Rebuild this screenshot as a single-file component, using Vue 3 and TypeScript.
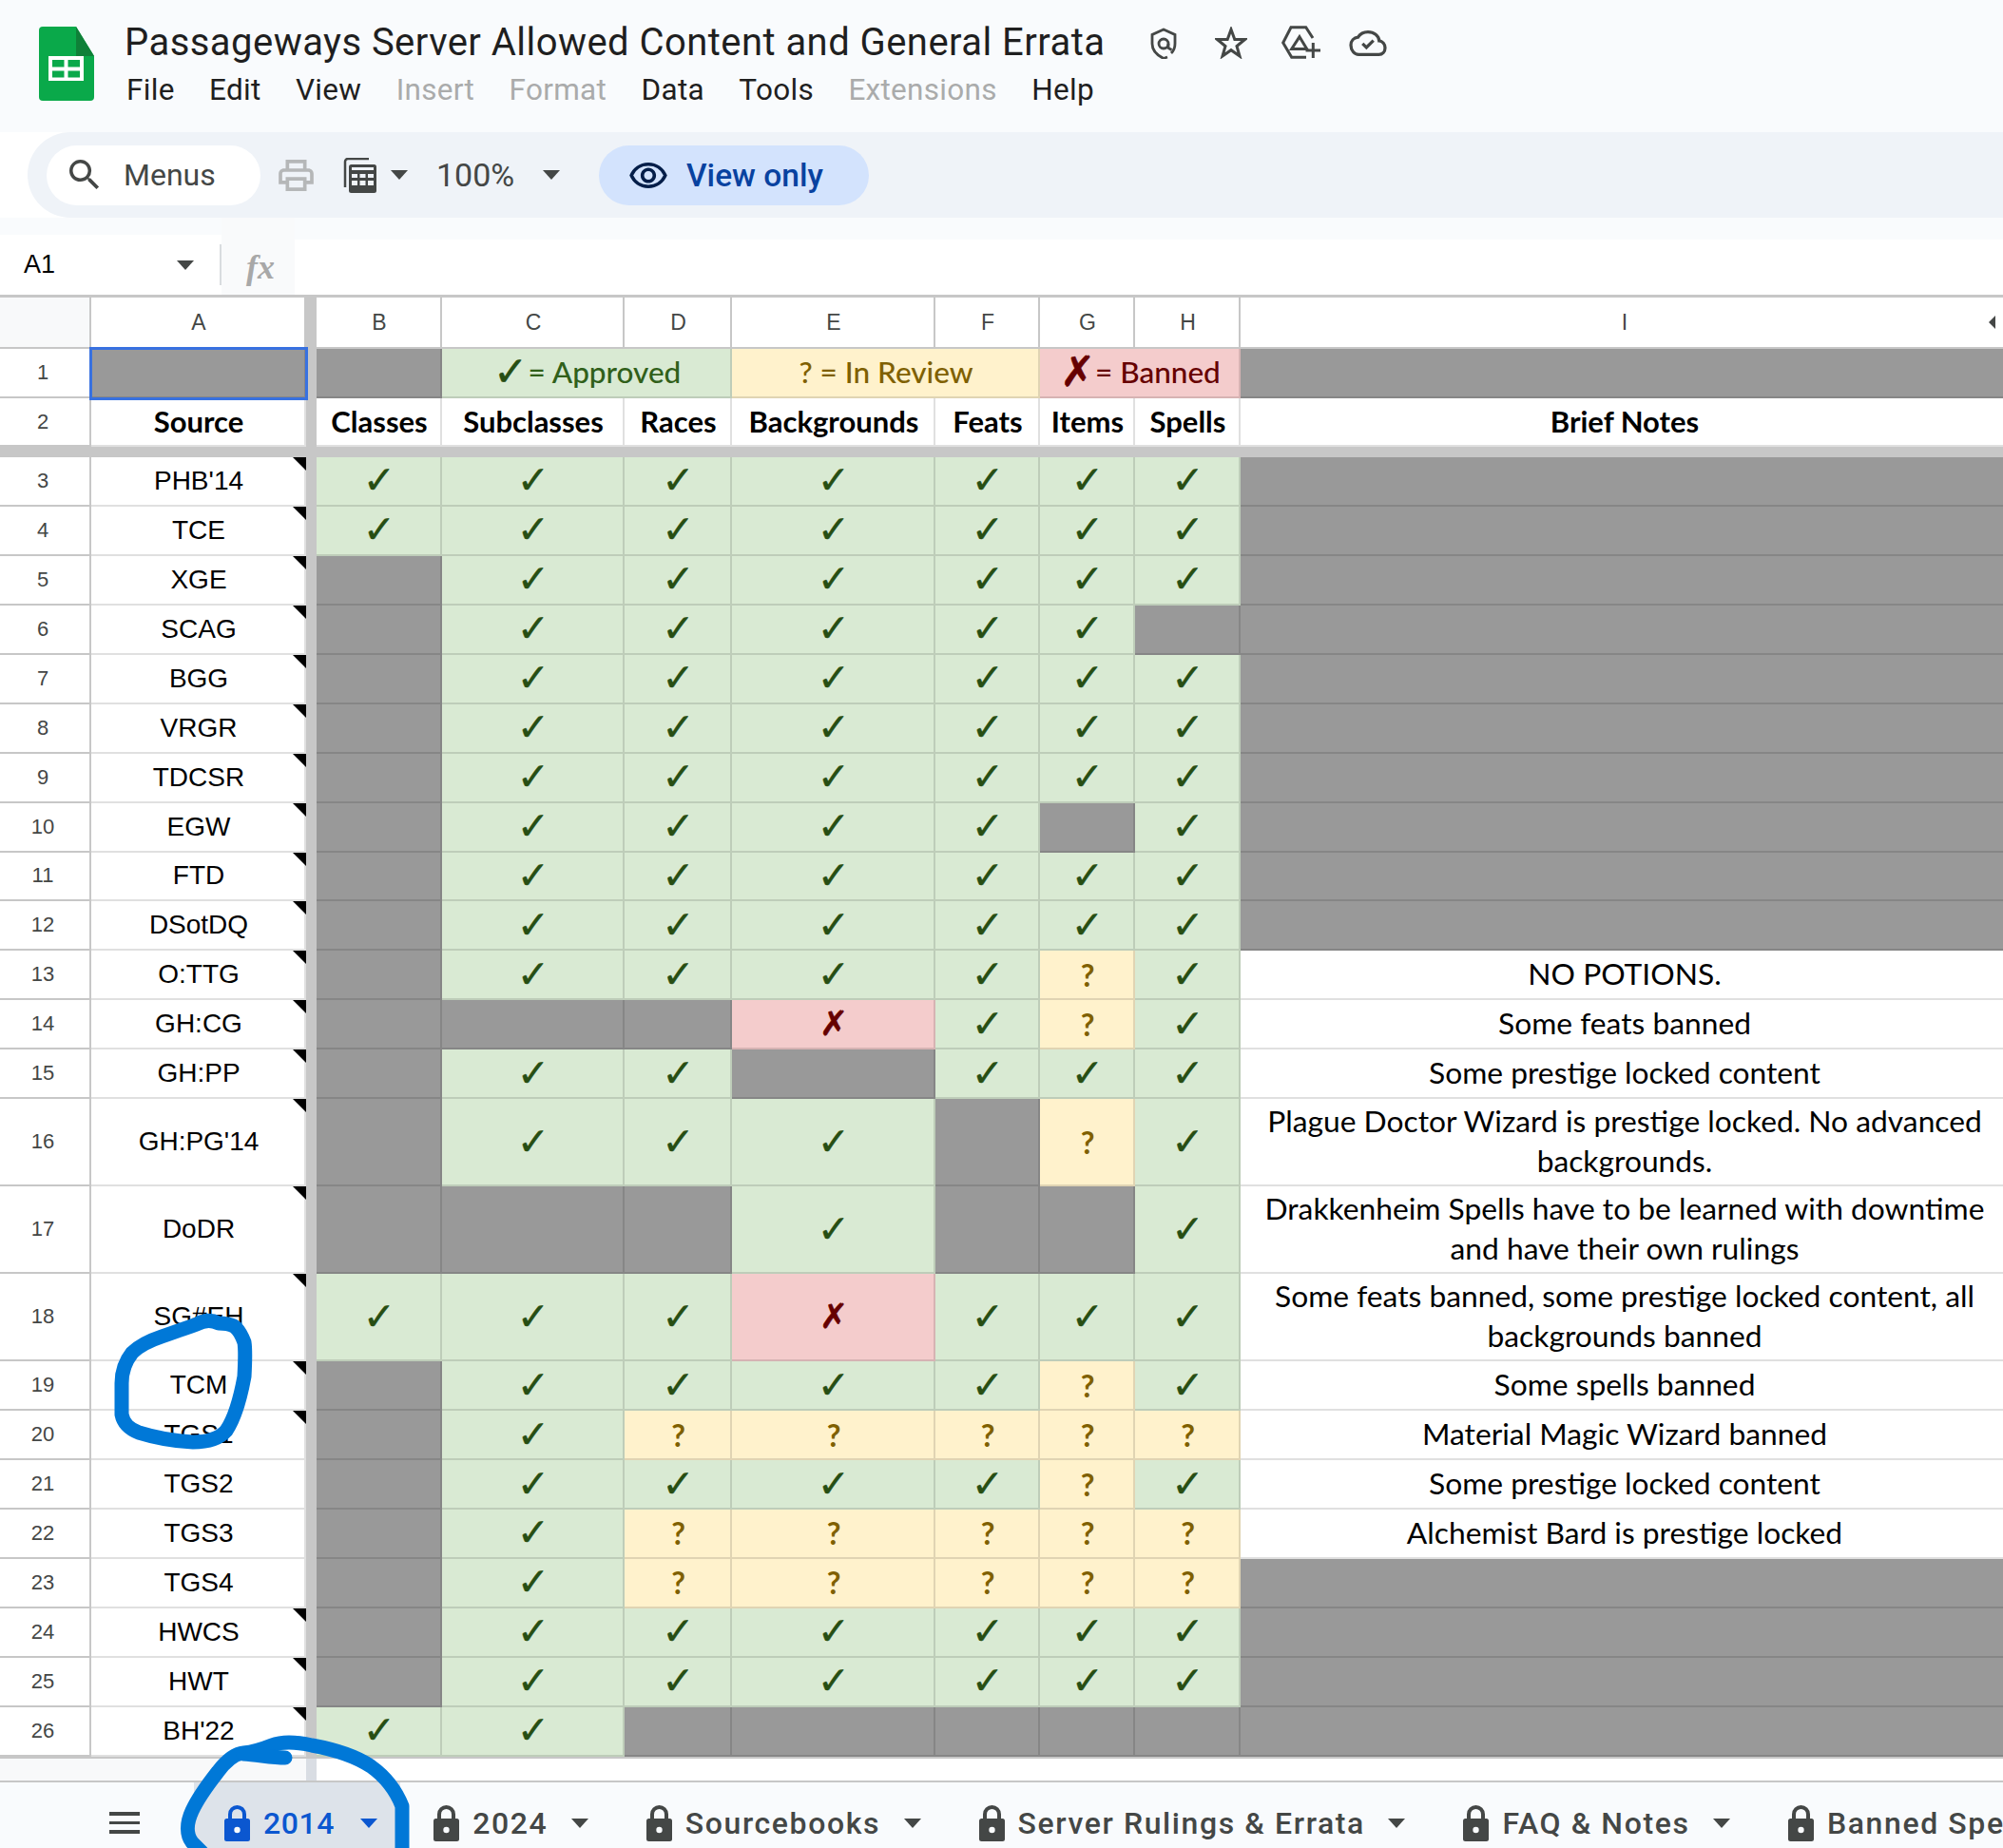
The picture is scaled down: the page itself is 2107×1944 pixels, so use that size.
<template>
  <div class="app">
    <header class="top">
      <svg class="logo" viewBox="0 0 58 78">
        <path d="M4 0H39L58 31V74a4 4 0 0 1-4 4H4a4 4 0 0 1-4-4V4a4 4 0 0 1 4-4z" fill="#0aa94a" />
        <path d="M39 0L58 31H39z" fill="#0f8038" />
        <path d="M10 31H47V57H10z" fill="#fff" />
        <path d="M14 35H26.500V42.500H14zM30.500 35H43V42.500H30.500zM14 46.500H26.500V53.500H14zM30.500 46.500H43V53.500H30.500z" fill="#0aa94a" />
      </svg>
      <div class="top-text">
        <div class="title-row">
          <span class="title">Passageways Server Allowed Content and General Errata</span>
          <svg class="ti shield" viewBox="0 0 28 33" fill="none" stroke="#444746" stroke-width="2.800">
            <path d="M18 31l-4 1.500C7 29 2 24 2 17V7.500L14 2l12 5.500V17c0 4.500-1.500 7.500-4 10" />
            <circle cx="14" cy="17" r="5" />
            <path d="M19 17v4.500l3.500 2" />
          </svg>
          <svg class="ti star" viewBox="0 0 34 34" fill="none" stroke="#444746" stroke-width="3">
            <path d="M17 3l3.800 10.500H31.500L23 20.500 26 31l-9-6.300L8 31l3-10.500-8.500-7H13.200z" />
          </svg>
          <svg class="ti drive" viewBox="0 0 42 36" fill="none" stroke="#444746" stroke-width="3">
            <path d="M34 13L26.700 1.700H11L2.700 18 11.700 33.300H27" />
            <path d="M20 11.700L27.700 24.500H11.700z" />
            <path d="M34.300 18V34M26.500 26H42" />
          </svg>
          <svg class="ti cloud" viewBox="0 0 24 16.500" fill="none" stroke="#444746" stroke-width="2">
            <path d="M19.200 6.700A7.200 6 0 0 0 12 1C9.300 1 6.900 2.300 5.600 4.400 2.900 4.700 1 6.700 1 9.500 1 12.800 3.300 15.500 6 15.500h13c2.300 0 4-1.800 4-4.300 0-2.400-1.700-4.300-3.800-4.500z" />
            <path d="M8.500 8.500l2.500 2.500 4.500-4.500" />
          </svg>
        </div>
        <nav class="menu">
          <span v-for="m in menu" :key="m.label" :class="{ off: m.off }">{{ m.label }}</span>
        </nav>
      </div>
    </header>

    <div class="toolbar">
      <div class="search">
        <svg class="search-ic" viewBox="3 3 18 18" fill="#444746">
          <path d="M15.500 14h-.79l-.28-.27A6.471 6.471 0 0 0 16 9.500 6.500 6.500 0 1 0 9.500 16c1.610 0 3.090-.59 4.230-1.570l.27.28v.79l5 4.990L20.490 19l-4.990-5zm-6 0C7.010 14 5 11.990 5 9.500S7.010 5 9.500 5 14 7.010 14 9.500 11.990 14 9.500 14z" />
        </svg>
        <span>Menus</span>
      </div>
      <svg class="print" viewBox="2 3 20 18" fill="#b5b7b8">
        <path d="M19 8h-1V3H6v5H5c-1.660 0-3 1.340-3 3v6h4v4h12v-4h4v-6c0-1.660-1.340-3-3-3zM8 5h8v3H8V5zm8 12v2H8v-4h8v2zm2-2v-2H6v2H4v-4c0-.55.45-1 1-1h14c.55 0 1 .45 1 1v4h-2z" />
      </svg>
      <svg class="calc" viewBox="0 0 36 37">
        <path d="M3 31V4a3 3 0 0 1 3-3H28" fill="none" stroke="#444746" stroke-width="2.500" />
        <rect x="7" y="7" width="29" height="30" rx="2.500" fill="#444746" />
        <path d="M10 10H33V13H10zM10 17H16V21H10zM18.500 17H24.500V21H18.500zM27 17H33V21H27zM10 24H16V29H10zM18.500 24H24.500V29H18.500zM27 24H33V29H27z" fill="#eff3f8" />
      </svg>
      <i class="caret calc-caret"></i>
      <span class="zoom">100%</span>
      <i class="caret zoom-caret"></i>
      <div class="view-only">
        <svg class="eye" viewBox="1 4 22 15" fill="#041e49">
          <path d="M12 6a9.770 9.770 0 0 1 8.820 5.500A9.770 9.770 0 0 1 12 17a9.770 9.770 0 0 1-8.820-5.500A9.770 9.770 0 0 1 12 6m0-2C7 4 2.730 7.110 1 11.500 2.730 15.890 7 19 12 19s9.270-3.110 11-7.500C21.270 7.110 17 4 12 4zm0 5a2.500 2.500 0 0 1 0 5 2.500 2.500 0 0 1 0-5m0-2c-2.480 0-4.500 2.020-4.500 4.500S9.520 16 12 16s4.500-2.020 4.500-4.500S14.480 7 12 7z" />
        </svg>
        <span>View only</span>
      </div>
    </div>

    <div class="formula">
      <div class="name-box">
        <span>A1</span>
        <i class="caret"></i>
      </div>
      <div class="fx-box"><span>fx</span></div>
    </div>

    <div class="sheet">
      <div class="row head-row">
        <div class="corner"></div>
        <div v-for="(c, i) in letters" :key="c" class="col-letter" :class="{ bar: c === '' }">
          {{ c }}<i v-if="i === letters.length - 1" class="col-arrow"></i>
        </div>
      </div>

      <div class="row r1">
        <div class="num">1</div>
        <div class="cell gray selected"></div>
        <div class="bar"></div>
        <div class="cell gray"></div>
        <div class="cell green legend span2"><b class="mark-c big">✓</b>= Approved</div>
        <div class="cell yellow legend span2">? = In Review</div>
        <div class="cell red legend span2"><b class="mark-x big">✗</b>= Banned</div>
        <div class="cell gray"></div>
      </div>

      <div class="row r2">
        <div class="num">2</div>
        <div class="cell th">Source</div>
        <div class="bar"></div>
        <div v-for="h in headings" :key="h" class="cell th">{{ h }}</div>
      </div>

      <div class="freeze"></div>

      <div v-for="r in rows" :key="r.n" class="row" :class="{ tall: r.tall }">
        <div class="num">{{ r.n }}</div>
        <div class="cell source">
          {{ r.src }}
          <i v-if="r.comment !== false" class="comment"></i>
        </div>
        <div class="bar"></div>
        <div v-for="(m, i) in r.marks.split('')" :key="i" class="cell" :class="markClass[m]">
          <span v-if="m !== 'g'" :class="'mark-' + m">{{ markText[m] }}</span>
        </div>
        <div v-if="r.note" class="cell note">{{ r.note }}</div>
        <div v-else class="cell gray"></div>
      </div>

      <div class="sheet-end">
        <div class="end-left"></div>
        <div class="end-bar"></div>
      </div>
    </div>

    <footer class="tabs">
      <div class="burger"><i></i><i></i><i></i></div>
      <div v-for="(t, i) in tabs" :key="t" class="tab" :class="{ active: i === 0 }">
        <svg class="lock" viewBox="0 0 27 38">
          <path d="M6 17V9.500a7.500 7.500 0 0 1 15 0V17" fill="none" stroke="currentColor" stroke-width="4" />
          <rect y="14" width="27" height="24" rx="2.500" fill="currentColor" />
          <circle cx="13.500" cy="26" r="3.200" fill="#f9fbfd" />
        </svg>
        <span class="tab-name">{{ t }}</span>
        <i class="caret"></i>
      </div>
    </footer>

    <svg class="ink" viewBox="0 0 2107 1944" fill="none" stroke="#0078d7" stroke-width="15" stroke-linecap="round" stroke-linejoin="round">
      <path d="M230 1392C222 1388 214 1389 207 1393C196 1397 184 1401 170 1406C155 1411 146 1416 139 1423C131 1433 128 1443 128 1455V1488C130 1498 136 1503 146 1507C162 1512 182 1516 203 1517C218 1517 230 1514 238 1505C248 1490 253 1470 257 1448C258 1430 258 1418 257 1412C254 1404 251 1398 246 1395C240 1392 234 1392 230 1392" />
      <path d="M423 1950V1900C416 1882 404 1868 390 1858C372 1846 350 1840 328 1836C310 1832 296 1832 286 1836C276 1840 268 1843 256 1844C246 1845 238 1852 229 1864C218 1878 208 1892 202 1905C196 1918 196 1930 202 1938L212 1948" />
      <path d="M300 1849C286 1849 272 1846 256 1845" />
    </svg>
  </div>
</template>

<script setup lang="ts">
type Row = {
  n: number;
  src: string;
  marks: string;
  note?: string;
  tall?: boolean;
  comment?: boolean;
};

const menu = [
  { label: "File" },
  { label: "Edit" },
  { label: "View" },
  { label: "Insert", off: true },
  { label: "Format", off: true },
  { label: "Data" },
  { label: "Tools" },
  { label: "Extensions", off: true },
  { label: "Help" },
];

const letters = ["A", "", "B", "C", "D", "E", "F", "G", "H", "I"];
const headings = ["Classes", "Subclasses", "Races", "Backgrounds", "Feats", "Items", "Spells", "Brief Notes"];
const tabs = ["2014", "2024", "Sourcebooks", "Server Rulings & Errata", "FAQ & Notes", "Banned Spells"];

const markClass: Record<string, string> = { c: "green", q: "yellow", x: "red", g: "gray" };
const markText: Record<string, string> = { c: "✓", q: "?", x: "✗" };

const rows: Row[] = [
  { n: 3, src: "PHB'14", marks: "ccccccc" },
  { n: 4, src: "TCE", marks: "ccccccc" },
  { n: 5, src: "XGE", marks: "gcccccc" },
  { n: 6, src: "SCAG", marks: "gcccccg" },
  { n: 7, src: "BGG", marks: "gcccccc" },
  { n: 8, src: "VRGR", marks: "gcccccc" },
  { n: 9, src: "TDCSR", marks: "gcccccc" },
  { n: 10, src: "EGW", marks: "gccccgc" },
  { n: 11, src: "FTD", marks: "gcccccc" },
  { n: 12, src: "DSotDQ", marks: "gcccccc" },
  { n: 13, src: "O:TTG", marks: "gccccqc", note: "NO POTIONS." },
  { n: 14, src: "GH:CG", marks: "gggxcqc", note: "Some feats banned" },
  { n: 15, src: "GH:PP", marks: "gccgccc", note: "Some prestige locked content" },
  { n: 16, src: "GH:PG'14", marks: "gcccgqc", tall: true, note: "Plague Doctor Wizard is prestige locked. No advanced\nbackgrounds." },
  { n: 17, src: "DoDR", marks: "gggcggc", tall: true, note: "Drakkenheim Spells have to be learned with downtime\nand have their own rulings" },
  { n: 18, src: "SG#EH", marks: "cccxccc", tall: true, note: "Some feats banned, some prestige locked content, all\nbackgrounds banned" },
  { n: 19, src: "TCM", marks: "gccccqc", note: "Some spells banned" },
  { n: 20, src: "TGS1", marks: "gcqqqqq", note: "Material Magic Wizard banned" },
  { n: 21, src: "TGS2", marks: "gccccqc", note: "Some prestige locked content", comment: false },
  { n: 22, src: "TGS3", marks: "gcqqqqq", note: "Alchemist Bard is prestige locked", comment: false },
  { n: 23, src: "TGS4", marks: "gcqqqqq", comment: false },
  { n: 24, src: "HWCS", marks: "gcccccc" },
  { n: 25, src: "HWT", marks: "gcccccc" },
  { n: 26, src: "BH'22", marks: "ccggggg" },
];
</script>

<style>
html,
body {
  margin: 0;
  background: #fff;
}
</style>

<style scoped>
.app {
  position: relative;
  width: 2107px;
  height: 1944px;
  overflow: hidden;
  display: flex;
  flex-direction: column;
  background: #fff;
  font-family: Roboto, "Noto Sans", sans-serif;
  color: #1f1f1f;
}

.top {
  height: 139px;
  box-sizing: border-box;
  display: flex;
  background: #f9fbfd;
  padding: 28px 0 0 41px;
}

.logo {
  width: 58px;
  height: 78px;
  flex: none;
}

.top-text {
  margin-left: 32px;
}

.title-row {
  display: flex;
  align-items: center;
  height: 34px;
}

.title {
  font-size: 40px;
  line-height: 34px;
  letter-spacing: 0.45px;
  white-space: nowrap;
  width: 1079px;
}

.ti {
  flex: none;
}

.shield {
  width: 28px;
  height: 33px;
}

.star {
  width: 34px;
  height: 34px;
  margin-left: 40px;
}

.drive {
  width: 42px;
  height: 36px;
  margin-left: 35px;
}

.cloud {
  width: 40px;
  height: 27px;
  margin-left: 30px;
}

.menu {
  display: flex;
  margin-top: 15px;
  margin-left: 2px;
  gap: 36.400px;
  font-size: 31.500px;
  line-height: 36px;
  letter-spacing: 0.3px;
}

.menu .off {
  color: #aaabab;
}

.toolbar {
  height: 90px;
  box-sizing: border-box;
  margin-left: 29px;
  padding-left: 20px;
  display: flex;
  align-items: center;
  background: #eff3f8;
  border-radius: 45px 0 0 45px;
  color: #444746;
}

.search {
  width: 225px;
  height: 63px;
  box-sizing: border-box;
  padding-left: 24px;
  display: flex;
  align-items: center;
  gap: 25px;
  border-radius: 32px;
  background: #fff;
  font-size: 32px;
}

.search-ic {
  width: 32px;
  height: 32px;
}

.print {
  width: 37px;
  height: 33px;
  margin-left: 19px;
}

.calc {
  width: 36px;
  height: 37px;
  margin-left: 30px;
}

.caret {
  display: block;
  flex: none;
  width: 0;
  height: 0;
  border-left: 9px solid transparent;
  border-right: 9px solid transparent;
  border-top: 10px solid #444746;
}

.calc-caret {
  margin-left: 15px;
}

.zoom {
  margin-left: 30px;
  width: 81px;
  font-size: 34px;
  white-space: nowrap;
}

.zoom-caret {
  margin-left: 31px;
}

.view-only {
  margin-left: 41px;
  width: 284px;
  height: 63px;
  box-sizing: border-box;
  padding-left: 32px;
  display: flex;
  align-items: center;
  gap: 20px;
  border-radius: 32px;
  background: #d3e3fd;
  color: #0842a0;
  font-size: 33.500px;
  font-weight: 500;
}

.eye {
  width: 40px;
  height: 27px;
}

.formula {
  height: 81px;
  box-sizing: border-box;
  display: flex;
  background: linear-gradient(#f9fbfd 23px, #fff 23px);
}

.name-box {
  width: 233px;
  height: 63px;
  margin-top: 18px;
  box-sizing: border-box;
  padding: 0 29px 0 25px;
  display: flex;
  align-items: center;
  justify-content: space-between;
  background: #fff;
  font-family: "Liberation Sans", Arial, sans-serif;
  font-size: 27px;
  color: #000;
  position: relative;
}

.name-box::after {
  content: "";
  position: absolute;
  right: 0;
  top: 10px;
  bottom: 10px;
  width: 2px;
  background: #d9dcdf;
}

.fx-box {
  width: 77px;
  display: flex;
  align-items: center;
  justify-content: center;
  padding: 23px 0 0 5px;
  box-sizing: border-box;
  background: #f9fafb;
}

.fx-box span {
  font-family: "Liberation Serif", serif;
  font-style: italic;
  font-weight: 700;
  font-size: 36px;
  color: #a8a8a8;
}

.sheet {
  border-top: 3px solid #c7c7c7;
  height: 1563px;
  box-sizing: border-box;
}

.row {
  display: grid;
  grid-template-columns: 96px 226px 11px 132px 192px 113px 214px 110px 100px 111px 808px;
  height: 51.950px;
  width: 2113px;
}

.row.tall {
  height: 92px;
}

.head-row {
  height: 54px;
  font-family: "Liberation Sans", Arial, sans-serif;
  font-size: 23px;
  color: #444746;
}

.r1 {
  height: 52px;
}

.r2 {
  height: 51px;
}

.corner {
  background: #f8f9fa;
  border-right: 2px solid #c7c7c7;
  border-bottom: 2px solid #c7c7c7;
  box-sizing: border-box;
}

.col-letter {
  position: relative;
  display: flex;
  align-items: center;
  justify-content: center;
  box-sizing: border-box;
  padding-left: 2px;
  border-right: 2px solid #c7c7c7;
  border-bottom: 2px solid #c7c7c7;
}

.col-letter.bar {
  border: 0;
}

.bar {
  background: #c7c7c7;
}

.col-arrow {
  position: absolute;
  right: 12px;
  top: 19px;
  border-top: 7px solid transparent;
  border-bottom: 7px solid transparent;
  border-right: 7px solid #444746;
}

.num {
  display: flex;
  align-items: center;
  justify-content: center;
  box-sizing: border-box;
  padding-right: 4px;
  border-right: 2px solid #c7c7c7;
  border-bottom: 2px solid #c7c7c7;
  font-family: "Liberation Sans", Arial, sans-serif;
  font-size: 22px;
  color: #444746;
}

.cell {
  position: relative;
  min-width: 0;
  display: flex;
  align-items: center;
  justify-content: center;
  box-sizing: border-box;
  padding-left: 2px;
  border-right: 2px solid rgba(0, 0, 0, 0.12);
  border-bottom: 2px solid rgba(0, 0, 0, 0.12);
  text-align: center;
  color: #000;
}

.span2 {
  grid-column: span 2;
}

.gray {
  background: #999;
}

.green {
  background: #d9ead3;
}

.yellow {
  background: #fff2cc;
}

.red {
  background: #f4cccc;
}

.selected {
  z-index: 1;
  outline: 3px solid #3871e0;
  outline-offset: -1px;
}

.legend {
  font-family: Lato, sans-serif;
  font-size: 31.500px;
  font-weight: 500;
  white-space: pre;
  padding-bottom: 3px;
}

.legend.green {
  color: #30601a;
}

.legend.yellow {
  color: #7f6000;
}

.legend.red {
  color: #660000;
}

.th {
  font-family: Lato, sans-serif;
  font-size: 31px;
  font-weight: 700;
  white-space: nowrap;
  padding-bottom: 2px;
}

.source {
  font-family: "Liberation Sans", Arial, sans-serif;
  font-size: 28px;
}

.note {
  font-family: Lato, sans-serif;
  font-size: 31.750px;
  line-height: 42px;
  white-space: pre-line;
  padding-bottom: 2px;
}

.comment {
  position: absolute;
  top: 0;
  right: -2px;
  border-top: 14px solid #000;
  border-left: 14px solid transparent;
}

.mark-c,
.mark-x {
  font-family: "DejaVu Sans", sans-serif;
  line-height: 1;
}

.mark-c {
  font-size: 41px;
  color: #274e13;
  -webkit-text-stroke: 0.4px #274e13;
}

.mark-q {
  font-family: Lato, sans-serif;
  font-size: 32px;
  font-weight: 700;
  color: #7f6000;
}

.mark-x {
  font-size: 36px;
  color: #660000;
  -webkit-text-stroke: 0.6px #660000;
}

.big {
  font-size: 44px;
  font-weight: 700;
  margin-right: 0;
}

.freeze {
  height: 11px;
  background: #c7c7c7;
}

.sheet-end {
  display: flex;
  height: 27px;
  border-top: 2px solid #c7c7c7;
}

.end-left {
  width: 322px;
  background: #f8f9fa;
}

.end-bar {
  width: 11px;
  background: #d9dde3;
}

.tabs {
  flex: 1;
  box-sizing: border-box;
  border-top: 2px solid #c7c7c7;
  background: #f9fbfd;
  display: flex;
  align-items: stretch;
  padding-left: 115px;
  color: #444746;
}

.burger {
  flex: none;
  box-sizing: border-box;
  width: 32px;
  margin-right: 57px;
  padding-top: 16px;
  display: flex;
  flex-direction: column;
  justify-content: center;
  gap: 6px;
}

.burger i {
  display: block;
  height: 3.500px;
  background: #444746;
}

.tab {
  flex: none;
  display: flex;
  align-items: center;
  padding: 16px 26px 0 35px;
  font-size: 32px;
  font-weight: 500;
  letter-spacing: 1.600px;
  white-space: nowrap;
}

.tab.active {
  padding-left: 32px;
  padding-right: 24px;
  background: #dde3ea;
  color: #0b57d0;
}

.tab.active .tab-name {
  letter-spacing: 0.6px;
  margin-right: 27px;
}

.tab.active .caret {
  border-top-color: #0b57d0;
}

.lock {
  width: 27px;
  height: 38px;
  margin-right: 14px;
}

.tab-name {
  margin-right: 24.500px;
}

.ink {
  position: absolute;
  inset: 0;
  width: 2107px;
  height: 1944px;
  pointer-events: none;
}
</style>
